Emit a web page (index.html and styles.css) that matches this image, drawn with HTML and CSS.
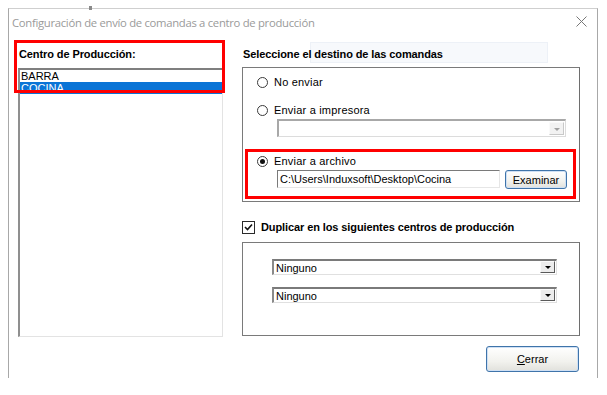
FILE: index.html
```html
<!DOCTYPE html>
<html lang="es">
<head>
  <meta charset="UTF-8">
  <title>Centros de producción</title>
  <link rel="stylesheet" href="styles.css">
</head>
<body>
  <div class="window">
    <span class="top-tick"></span>
    <div class="titlebar">
      <span class="title">Configuración de envío de comandas a centro de producción</span>
      <svg class="close" width="11" height="11" viewBox="0 0 11 11">
        <path d="M0.5 0.5 L10.5 10.5 M10.5 0.5 L0.5 10.5" stroke="#777" stroke-width="1" fill="none"/>
      </svg>
    </div>

    <div class="content">
      <div class="left-col">
        <div class="label-bold left-label">Centro de Producción:</div>
        <div class="listbox">
          <div class="list-item">BARRA</div>
          <div class="list-item selected">COCINA</div>
        </div>
        <div class="mark mark-left"></div>
      </div>

      <div class="right-col">
        <div class="ghost-tip"></div>
        <div class="label-bold right-label">Seleccione el destino de las comandas</div>

        <div class="group group-dest">
          <div class="radio-row first">
            <span class="radio"></span>
            <span>No enviar</span>
          </div>
          <div class="radio-row second">
            <span class="radio"></span>
            <span>Enviar a impresora</span>
          </div>
          <div class="combo disabled printer-combo">
            <span class="combo-text"></span>
            <span class="combo-btn"><span class="arrow"></span></span>
          </div>
          <div class="radio-row third">
            <span class="radio checked"></span>
            <span>Enviar a archivo</span>
          </div>
          <div class="file-row">
            <div class="textbox">C:\Users\Induxsoft\Desktop\Cocina</div>
            <button class="xp-btn browse-btn">Examinar</button>
          </div>
          <div class="mark mark-right"></div>
        </div>

        <div class="check-row">
          <span class="checkbox">
            <svg width="9" height="9" viewBox="0 0 9 9">
              <path d="M1 4 L3.5 6.5 L8 1.5" stroke="#111" stroke-width="1.6" fill="none"/>
            </svg>
          </span>
          <span class="label-bold">Duplicar en los siguientes centros de producción</span>
        </div>

        <div class="group group-dup">
          <div class="combo dup-combo">
            <span class="combo-text">Ninguno</span>
            <span class="combo-btn"><span class="arrow"></span></span>
          </div>
          <div class="combo dup-combo">
            <span class="combo-text">Ninguno</span>
            <span class="combo-btn"><span class="arrow"></span></span>
          </div>
        </div>

        <div class="footer">
          <button class="xp-btn close-btn"><u>C</u>errar</button>
        </div>
      </div>
    </div>
  </div>
</body>
</html>
```

FILE: styles.css
```css
body {
  margin: 0;
  padding: 8px 0 0 8px;
  background: #ffffff;
  font-family: "Liberation Sans", Arial, sans-serif;
  font-size: 11px;
  color: #000;
}
.window {
  position: relative;
  width: 590px;
  height: 370px;
  box-sizing: border-box;
  border: 1px solid #a8a8a8;
  border-top-color: #cfcfcf;
  border-bottom: none;
  background: #fff;
}
.top-tick {
  position: absolute;
  left: 80px;
  top: -3px;
  width: 3px;
  height: 4px;
  background: #8a8a8a;
}
.titlebar {
  height: 31px;
  display: flex;
  align-items: center;
  justify-content: space-between;
  padding: 0 10px 0 3px;
}
.title {
  font-family: "Open Sans", "Liberation Sans", sans-serif;
  font-size: 11.3px;
  letter-spacing: -0.3px;
  color: #9a9a9a;
  margin-top: -4px;
}
.close {
  margin-top: -6px;
}
.content {
  display: flex;
  padding-left: 5px;
  gap: 17px;
}
.label-bold {
  font-weight: bold;
  font-size: 11px;
  letter-spacing: -0.1px;
}
.left-col {
  position: relative;
  width: 211px;
}
.left-label {
  height: 28px;
  line-height: 28px;
  padding-left: 5px;
}
.listbox {
  margin-left: 4px;
  width: 205px;
  height: 269px;
  box-sizing: border-box;
  border: 2px solid;
  border-color: #7f7f7f #e3e3e3 #e3e3e3 #8f8f8f;
  border-right-width: 1px;
  border-bottom-width: 1px;
  background: #fff;
}
.list-item {
  height: 12px;
  line-height: 12px;
  padding-left: 1px;
  font-size: 11px;
}
.list-item.selected {
  background: #0a74d6;
  color: #fff;
}
.mark {
  position: absolute;
  border: 3px solid #ff0000;
  pointer-events: none;
}
.mark-left {
  left: 0;
  top: 0;
  width: 205px;
  height: 47px;
}
.right-col {
  position: relative;
  width: 337px;
}
.right-label {
  position: relative;
  height: 27px;
  line-height: 28px;
  padding-left: 1px;
}
.ghost-tip {
  position: absolute;
  left: 68px;
  top: 2px;
  width: 238px;
  height: 21px;
  box-sizing: border-box;
  background: #f7f9fc;
  border: 1px solid #edf1f7;
}
.group {
  position: relative;
  box-sizing: border-box;
  border: 1px solid #7a7a7a;
  border-right-color: #6e6e6e;
  width: 338px;
}
.group-dest {
  height: 135px;
}
.radio-row {
  display: flex;
  align-items: center;
  gap: 6px;
  height: 14px;
  padding-left: 14px;
}
.radio-row.first { margin-top: 7px; }
.radio-row.second { margin-top: 14px; }
.radio-row.third { margin-top: 17px; }
.radio-row span:last-child {
  letter-spacing: 0.2px;
}
.radio {
  width: 9px;
  height: 9px;
  border: 1px solid #3a3a3a;
  border-radius: 50%;
  background: #fff;
  position: relative;
}
.radio.checked::after {
  content: "";
  position: absolute;
  left: 2px;
  top: 2px;
  width: 5px;
  height: 5px;
  border-radius: 50%;
  background: #111;
}
.combo {
  display: flex;
  box-sizing: border-box;
  border: 1px solid;
  border-color: #828282 #f0f0f0 #f0f0f0 #828282;
  background: #fff;
  font-size: 11px;
}
.combo-text {
  flex: 1;
  line-height: 14px;
  padding-left: 2px;
}
.combo-btn {
  width: 15px;
  display: flex;
  align-items: center;
  justify-content: center;
  box-sizing: border-box;
  border: 1px solid;
  border-color: #f4f4f4 #6e6e6e #6e6e6e #f4f4f4;
  background: #e6e6e6;
}
.arrow {
  width: 0;
  height: 0;
  border-left: 3px solid transparent;
  border-right: 3px solid transparent;
  border-top: 3px solid #000;
  margin-top: 1px;
}
.printer-combo {
  margin: 2px 0 0 34px;
  width: 289px;
  height: 18px;
  border-color: #a8a8a8 #dcdcdc #dcdcdc #a8a8a8;
  border-width: 2px 1px 1px 2px;
}
.combo.disabled .combo-btn {
  border-color: #fafafa #c8c8c8 #c8c8c8 #fafafa;
  background: #f2f2f2;
  margin: 1px 1px 1px 0;
}
.combo.disabled .arrow {
  border-top-color: #a0a0a0;
}
.file-row {
  display: flex;
  gap: 5px;
  margin: 2px 0 0 34px;
}
.textbox {
  width: 223px;
  height: 18px;
  box-sizing: border-box;
  border: 1px solid;
  border-color: #7a7a7a #e6e6e6 #e6e6e6 #7a7a7a;
  line-height: 16px;
  padding-left: 2px;
  font-size: 11px;
  white-space: nowrap;
}
.xp-btn {
  font-family: "Liberation Sans", Arial, sans-serif;
  font-size: 11px;
  color: #000;
  box-sizing: border-box;
  border: 1px solid #3f74aa;
  border-radius: 3px;
  background: linear-gradient(#ffffff, #f2f2ee 60%, #e1e1dc);
  box-shadow: inset 0 0 0 1px #cfe0f4;
  padding: 0;
}
.browse-btn {
  width: 62px;
  height: 19px;
}
.mark-right {
  left: 2px;
  top: 81px;
  width: 325px;
  height: 44px;
}
.check-row {
  display: flex;
  align-items: center;
  gap: 6px;
  margin-top: 18px;
  height: 14px;
}
.checkbox {
  width: 11px;
  height: 11px;
  border: 1px solid #2a2a2a;
  display: flex;
  align-items: center;
  justify-content: center;
  background: #fff;
}
.group-dup {
  margin-top: 8px;
  height: 94px;
  padding: 16px 0 0 29px;
  display: flex;
  flex-direction: column;
  gap: 12px;
}
.dup-combo {
  width: 285px;
  height: 16px;
  border-width: 2px 1px 1px 2px;
  border-color: #7a7a7a #e0e0e0 #e0e0e0 #8a8a8a;
}
.dup-combo .combo-btn {
  width: 15px;
  margin: 0 1px 1px 0;
  border-color: #fafafa #5a5a5a #5a5a5a #fafafa;
  background: #ececec;
}
.footer {
  display: flex;
  justify-content: flex-end;
  margin-top: 10px;
}
.close-btn {
  width: 93px;
  height: 26px;
}
```
